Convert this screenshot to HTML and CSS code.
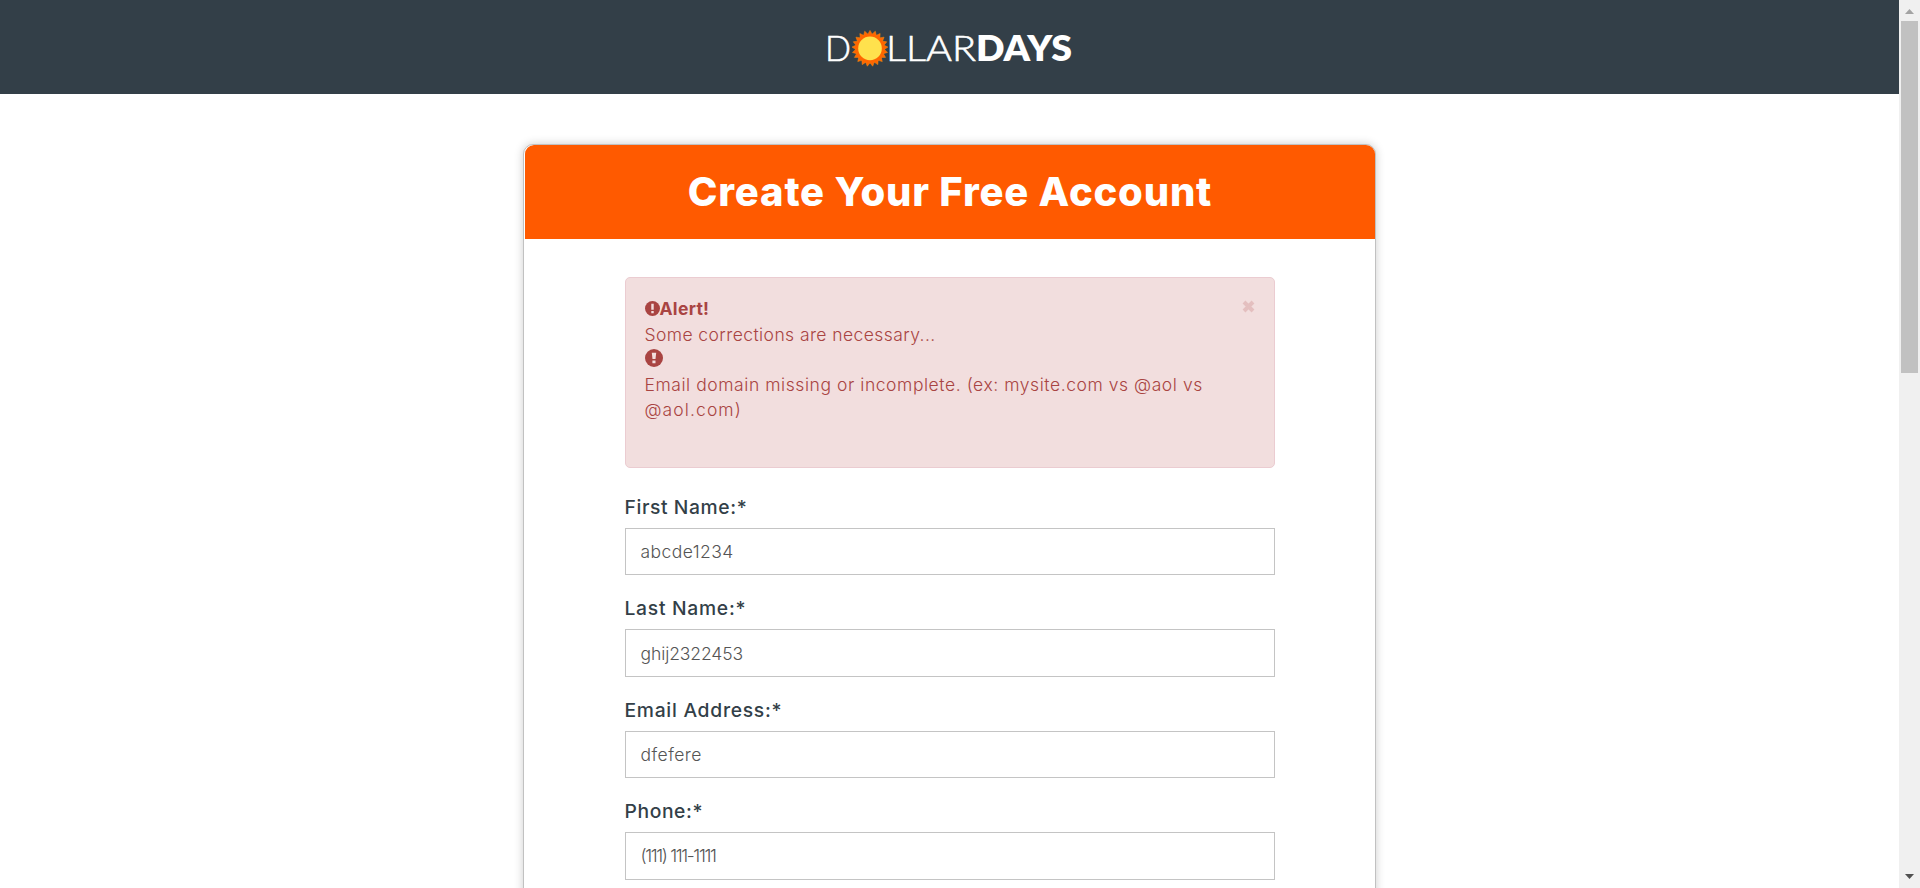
FILE: index.html
```html
<!DOCTYPE html>
<html lang="en">
<head>
<meta charset="utf-8">
<title>Create Your Free Account</title>
<link rel="stylesheet" href="styles.css">
</head>
<body>
<div class="window">
  <div class="page">
    <header class="site-header">
      <svg class="logo" width="250" height="40" viewBox="0 0 250 40" role="img" aria-label="DollarDays">
        <g class="logo-light">
          <text x="-1" y="31.9" textLength="26" lengthAdjust="spacingAndGlyphs">D</text>
          <text x="60" y="31.9" textLength="90" lengthAdjust="spacingAndGlyphs">LLAR</text>
        </g>
        <text class="logo-bold" x="150" y="31.9" textLength="96" lengthAdjust="spacingAndGlyphs">DAYS</text>
        <g class="sun-rays" transform="translate(44 19.4)">
          <path d="M0-18L15.6 9H-15.6z"/>
          <path transform="rotate(17.143)" d="M0-18L15.6 9H-15.6z"/>
          <path transform="rotate(34.286)" d="M0-18L15.6 9H-15.6z"/>
          <path transform="rotate(51.429)" d="M0-18L15.6 9H-15.6z"/>
          <path transform="rotate(68.571)" d="M0-18L15.6 9H-15.6z"/>
          <path transform="rotate(85.714)" d="M0-18L15.6 9H-15.6z"/>
          <path transform="rotate(102.857)" d="M0-18L15.6 9H-15.6z"/>
          <circle r="14.4"/>
        </g>
        <circle class="sun-core" cx="44" cy="19.4" r="11.8"/>
      </svg>
    </header>
    <main class="card">
      <h1 class="card-title"><span>Create Your Free Account</span></h1>
      <form class="card-body">
        <div class="alert">
          <svg class="close" width="13" height="13" viewBox="0 0 13 13"><path d="M2 2L11 11M11 2L2 11"/></svg>
          <p class="alert-head"><svg width="15" height="15" viewBox="0 0 16 16"><circle cx="8" cy="8" r="8"/><path d="M6.7 2.8h2.6v6.4H6.7zM6.7 10.6h2.6v2.4H6.7z"/></svg><strong>Alert!</strong></p>
          <p class="alert-note">Some corrections are necessary...</p>
          <svg class="alert-icon" width="18" height="18" viewBox="0 0 18 18"><circle cx="9" cy="9" r="9"/><path d="M6.8 3.8h4.4L10.5 10h-3zM7.4 11.5h3.1v2.8H7.4z"/></svg>
          <p class="alert-text">Email domain missing or incomplete. (ex: mysite.com vs @aol vs<br><span>@aol.com)</span></p>
        </div>
        <label class="field first"><span>First Name:*</span><input value="abcde1234"></label>
        <label class="field last"><span>Last Name:*</span><input value="ghij2322453"></label>
        <label class="field email"><span>Email Address:*</span><input value="dfefere"></label>
        <label class="field phone"><span>Phone:*</span><input value="(111) 111-1111"></label>
      </form>
    </main>
  </div>
  <div class="scrollbar">
    <svg width="9" height="5" viewBox="0 0 9 5"><path fill="#a3a3a3" d="M0 5L4.5 0L9 5z"/></svg>
    <div class="thumb"></div>
    <svg width="9" height="5" viewBox="0 0 9 5"><path fill="#505050" d="M0 0H9L4.5 5z"/></svg>
  </div>
</div>
</body>
</html>
```
FILE: styles.css
```css
* { box-sizing: border-box; }
body { margin: 0; background: #fff; font-family: Inter, "Open Sans", sans-serif; font-weight: 300; overflow: hidden; }
p, h1 { margin: 0; }
.window { display: flex; height: 888px; overflow: hidden; }
.page { flex: 1; overflow: hidden; }
.site-header { height: 94px; background: #333f48; display: flex; justify-content: center; padding: 29px 0 0 3px; }
.logo { overflow: visible; font-family: Lato, sans-serif; fill: #fff; font-size: 35px; }
.logo-light { font-weight: 300; stroke: #fff; stroke-width: .6px; }
.logo-bold { font-weight: 800; }
.sun-rays { fill: #ff6600; stroke: #f08a10; stroke-width: .5px; }
.sun-rays circle { stroke: none; }
.sun-core { fill: #ffe14d; }
.card { width: 853px; height: 900px; margin: 50px auto 0; border: 1px solid #c1c1c1; border-radius: 10px; box-shadow: 0 0 10px rgba(0,0,0,.2); background: #fff; overflow: hidden; }
.card-title { height: 94px; margin-left: 1px; border-top-left-radius: 9px; background: #ff5a00; color: #fff; text-align: center; font-size: 40px; line-height: 94px; font-weight: 800; white-space: nowrap; letter-spacing: .8px; }
.card-body { padding: 38px 100.5px 0; }
.alert { position: relative; height: 191px; background: #f2dede; border: 1px solid #ebccd1; border-radius: 5px; padding: 17px 19px 0; color: #a94442; font-size: 17.5px; line-height: 25px; white-space: nowrap; }
.close { position: absolute; right: 19px; top: 22px; stroke: #e4bfbf; stroke-width: 4; }
.alert-head { display: flex; align-items: center; height: 27px; padding-bottom: 1px; }
.alert-head svg { fill: #a94442; }
.alert strong { font-weight: 700; letter-spacing: .3px; }
.alert svg path { fill: #f2dede; }
.alert-note { letter-spacing: .42px; }
.alert-text { letter-spacing: .56px; }
.alert-text span { letter-spacing: 1.1px; }
.alert-icon { display: block; fill: #a94442; margin: 2px 0 5px; }
.field { display: block; height: 101.4px; color: #333f48; }
.first { margin-top: 26px; }
.field span { display: block; height: 34px; line-height: 27px; font-size: 19.3px; font-weight: 500; letter-spacing: .6px; }
.field.last span, .field.email span { letter-spacing: .72px; }
.field input { display: block; width: 100%; height: 47.4px; border: 1px solid #c4c4c4; padding: 0 15px; font: 300 17.5px Inter, "Open Sans", sans-serif; color: #555; outline: 0; letter-spacing: .45px; }
.field.last input { letter-spacing: -.1px; }
.field.phone input { letter-spacing: -1.35px; }
.scrollbar { width: 21px; background: #f0f0f0; display: flex; flex-direction: column; align-items: center; padding: 9px 0; }
.thumb { width: 17px; height: 352px; margin: 7px 0 auto; background: #c1c1c1; }
```
